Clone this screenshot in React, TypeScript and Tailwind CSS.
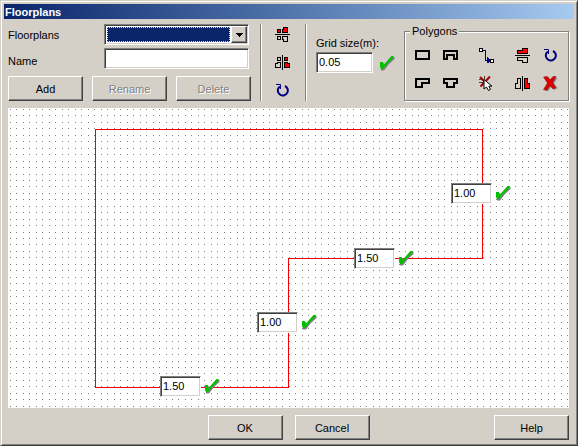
import { ButtonHTMLAttributes, InputHTMLAttributes, ReactNode, useState } from 'react';
import { clsx } from 'clsx';

const SUNKEN =
  'border border-t-[#808080] border-l-[#808080] border-r-white border-b-white shadow-[inset_1px_1px_0_#404040,inset_-1px_-1px_0_#d4d0c8]';
const RAISED =
  'border border-t-white border-l-white border-r-[#404040] border-b-[#404040] shadow-[inset_-1px_-1px_0_#808080]';

// Grid step in pixels for 0.05 m
const STEP_X = 6.48;
const STEP_Y = 6.45;

const EDGES = [
  { id: 'right', value: '1.00', place: 'left-[443px] top-[75px]' },
  { id: 'step-top', value: '1.50', place: 'left-[346px] top-[140px]' },
  { id: 'step-side', value: '1.00', place: 'left-[249px] top-[204px]' },
  { id: 'bottom', value: '1.50', place: 'left-[152px] top-[268px]' },
];

function PushButton({ className, ...props }: ButtonHTMLAttributes<HTMLButtonElement>) {
  return (
    <button
      type="button"
      className={clsx(
        RAISED,
        'h-[25px] w-[75px] bg-[#d4d0c8] text-center leading-4 disabled:text-[#808080] disabled:[text-shadow:1px_1px_0_#fff]',
        className
      )}
      {...props}
    />
  );
}

function TextBox({ className, ...props }: InputHTMLAttributes<HTMLInputElement>) {
  return (
    <input
      type="text"
      className={clsx(SUNKEN, 'h-[21px] bg-white px-0.5 pb-0.5 leading-4 text-black outline-none', className)}
      {...props}
    />
  );
}

function ToolButton({ label, children }: { label: string; children: ReactNode }) {
  return (
    <button type="button" aria-label={label} title={label} className="flex h-5 w-5 items-center justify-center">
      {children}
    </button>
  );
}

function CheckIcon() {
  return (
    <svg width="15" height="16" viewBox="0 0 15 16">
      <path d="M1 8 H4 V11 L12.5 2 H14.5 V4 L9 9 L4 15.5 H1 Z" fill="#808080" />
      <path d="M0 7 H3 V10.5 L11.5 1 H13.5 V2.5 L8 8 L3 14 H1 L0 12 Z" fill="#00c000" />
    </svg>
  );
}

function FlipPlanIcon({ vertical = false }: { vertical?: boolean }) {
  return (
    <svg width="15" height="15" viewBox="0 0 15 15" shapeRendering="crispEdges">
      <g transform={vertical ? 'rotate(90 7.5 7.5)' : undefined} stroke="#000" fill="none">
        <path d="M0 7.5 H15" />
        <path d="M2.5 2.5 H5.5 V5.5 H2.5 Z" fill="#f00" />
        <path d="M7.5 5.5 V2.5 H8.5 V0.5 H12.5 V5.5 Z" fill="#f00" />
        <path d="M2.5 9.5 H5.5 V12.5 H2.5 Z" />
        <path d="M7.5 9.5 V12.5 H8.5 V14.5 H12.5 V9.5 Z" />
      </g>
    </svg>
  );
}

function FlipPolygonIcon({ vertical = false }: { vertical?: boolean }) {
  return (
    <svg width="15" height="15" viewBox="0 0 15 15" shapeRendering="crispEdges">
      <g transform={vertical ? 'rotate(90 7.5 7.5)' : undefined} stroke="#000" fill="none">
        <path d="M0 7.5 H15" />
        <path d="M2.5 5.5 V2.5 H7.5 V0.5 H12.5 V5.5 Z" fill="#f00" />
        <path d="M2.5 9.5 V12.5 H7.5 V14.5 H12.5 V9.5 Z" />
      </g>
    </svg>
  );
}

function RotateIcon() {
  return (
    <svg width="13" height="13" viewBox="0 0 13 13" fill="none" stroke="#000080">
      <path d="M9 2 A5 5 0 1 1 2.5 4 L4 2.5" strokeWidth="2" />
      <path d="M0 0.5 H4.5 V5" />
    </svg>
  );
}

function ShapeIcon({ d }: { d: string }) {
  return (
    <svg width="15" height="10" viewBox="0 0 15 10" shapeRendering="crispEdges">
      <path d={d} fill="none" stroke="#000" strokeWidth="2" />
    </svg>
  );
}

function ConnectIcon() {
  return (
    <svg width="15" height="15" viewBox="0 0 15 15" shapeRendering="crispEdges">
      <path d="M4 2.5 H6.5 V12.5 H11" fill="none" stroke="#000080" />
      <path d="M8 9 L11.5 12.5 L8 16 Z" fill="#0000a0" />
      <path d="M0.5 0.5 H3.5 V3.5 H0.5 Z M11.5 11.5 H14.5 V14.5 H11.5 Z" fill="#fff" stroke="#000" />
    </svg>
  );
}

function RemovePointIcon() {
  return (
    <svg width="15" height="15" viewBox="0 0 15 15">
      <path d="M1 1 L10 10 M11 0.5 L1.5 10.5" stroke="#a00000" strokeWidth="2" />
      <path d="M0 3.5 H3 M5.5 0 V3 M0 6.5 H4" stroke="#404040" />
      <path d="M5 3.5 V13 L7.5 11 L9.5 14.5 L11.5 13.5 L9.8 10.2 H13 Z" fill="#fff" stroke="#000" />
    </svg>
  );
}

function DeleteIcon() {
  return (
    <svg width="15" height="15" viewBox="0 0 15 15">
      <path d="M2 2 L6 2 L8.5 5 L11 2 L14.5 1.5 L11 7.5 L14.5 12 L11.5 14 L8 10.5 L5 15 L1.5 15 L6 8 Z" fill="#808080" />
      <path d="M0.5 1 L4.5 0.5 L7 4 L10 0.5 L13 0.5 L9.5 6.5 L12.5 11.5 L10 13 L7 9.5 L4 14 L0.5 13.5 L4.5 7 Z" fill="#e00000" stroke="#900000" strokeWidth="0.5" />
    </svg>
  );
}

function GridDots() {
  const rows = Array.from({ length: 160 }, (_, i) => Math.floor(1 + i * STEP_Y + 0.5));
  const cols = Array.from({ length: 300 }, (_, i) => Math.floor(2 + i * STEP_X + 0.5));
  return <path d={rows.map(y => cols.map(x => `M${x} ${y}h1v1h-1z`).join('')).join('')} fill="#808080" />;
}

function EdgeField({ id, value, place }: { id: string; value: string; place: string }) {
  const [length, setLength] = useState(value);
  return (
    <div className={clsx('absolute flex items-start gap-1', place)}>
      <TextBox aria-label={`Edge length ${id}`} className="w-[41px]" value={length} onChange={e => setLength(e.target.value)} />
      <button type="button" aria-label="Apply length" className="pt-0.5">
        <CheckIcon />
      </button>
    </div>
  );
}

export default function App() {
  const [name, setName] = useState('');
  const [gridSize, setGridSize] = useState('0.05');

  return (
    <div className="flex h-screen min-h-[300px] flex-col border border-t-[#d4d0c8] border-r-[#404040] border-b-[#404040] border-l-[#d4d0c8] bg-[#d4d0c8] p-[3px] pb-[5px] font-['Liberation_Sans',Arial,sans-serif] text-[11px] leading-4 text-black shadow-[inset_1px_1px_0_#fff,inset_-1px_-1px_0_#808080]">
      <h1 className="h-[15px] shrink-0 bg-linear-to-r from-[#0a246a] to-[#a6caf0] px-px text-[11px] leading-4 font-bold text-white">
        Floorplans
      </h1>

      <div className="flex min-h-0 flex-1 flex-col pt-[5px] pr-[5px] pl-1">
        <div className="flex h-[77px] shrink-0">
          <div className="flex w-[243px] shrink-0 flex-col">
            <div className="flex items-center">
              <label htmlFor="floorplan" className="w-24">Floorplans</label>
              <div className={clsx(SUNKEN, 'flex h-[21px] w-[145px] bg-white p-px')}>
                <div className="flex-1 p-px">
                  <select
                    id="floorplan"
                    className="block h-full w-full appearance-none border border-dotted border-[#f5db95] bg-[#0a246a] text-white outline-none"
                  />
                </div>
                <span className={clsx(RAISED, 'pointer-events-none flex w-4 items-center justify-center bg-[#d4d0c8]')}>
                  <svg width="7" height="4" viewBox="0 0 7 4" shapeRendering="crispEdges">
                    <path d="M0 0 H7 V1 H6 V2 H5 V3 H4 V4 H3 V3 H2 V2 H1 V1 H0 Z" />
                  </svg>
                </span>
              </div>
            </div>
            <div className="mt-[3px] flex items-center">
              <label htmlFor="name" className="w-24 pt-1">Name</label>
              <TextBox id="name" className="w-[145px]" value={name} onChange={e => setName(e.target.value)} />
            </div>
            <div className="mt-[7px] flex justify-between">
              <PushButton>Add</PushButton>
              <PushButton disabled>Rename</PushButton>
              <PushButton disabled>Delete</PushButton>
            </div>
          </div>

          <div className="ml-[9px] flex w-[46px] shrink-0 flex-col items-center justify-center gap-2 border-x border-[#808080] pr-0.5 shadow-[inset_1px_0_0_#fff,1px_0_0_#fff]">
            <ToolButton label="Flip floorplan vertically"><FlipPlanIcon /></ToolButton>
            <ToolButton label="Flip floorplan horizontally"><FlipPlanIcon vertical /></ToolButton>
            <ToolButton label="Rotate floorplan"><RotateIcon /></ToolButton>
          </div>

          <div className="ml-2.5 w-[88px] shrink-0 pt-[11px]">
            <label htmlFor="grid-size" className="block whitespace-nowrap">Grid size(m):</label>
            <div className="mt-px flex items-center gap-[7px]">
              <TextBox id="grid-size" className="w-[57px]" value={gridSize} onChange={e => setGridSize(e.target.value)} />
              <button type="button" aria-label="Apply grid size"><CheckIcon /></button>
            </div>
          </div>

          <fieldset className="min-w-[165px] flex-1 border border-[#808080] px-[3px] pt-[3px] shadow-[inset_1px_1px_0_#fff,1px_1px_0_#fff]">
            <legend className="ml-0.5 bg-[#d4d0c8] px-0.5 leading-[14px]">Polygons</legend>
            <div className="grid auto-rows-[28px] grid-cols-[28px_28px_44px_28px_28px] place-items-center">
              <ToolButton label="Rectangle"><ShapeIcon d="M1 1 H14 V9 H1 Z" /></ToolButton>
              <ToolButton label="U shape"><ShapeIcon d="M1 1 H14 V9 H11 V5 H4 V9 H1 Z" /></ToolButton>
              <ToolButton label="Insert point"><ConnectIcon /></ToolButton>
              <ToolButton label="Flip polygon vertically"><FlipPolygonIcon /></ToolButton>
              <ToolButton label="Rotate polygon"><RotateIcon /></ToolButton>
              <ToolButton label="L shape"><ShapeIcon d="M1 1 H14 V5 H7 V9 H1 Z" /></ToolButton>
              <ToolButton label="T shape"><ShapeIcon d="M1 1 H14 V5 H11 V9 H4 V5 H1 Z" /></ToolButton>
              <ToolButton label="Remove point"><RemovePointIcon /></ToolButton>
              <ToolButton label="Flip polygon horizontally"><FlipPolygonIcon vertical /></ToolButton>
              <ToolButton label="Delete polygon"><DeleteIcon /></ToolButton>
            </div>
          </fieldset>
        </div>

        <div className="relative mt-[7px] min-h-0 flex-1 overflow-hidden bg-white">
          <svg className="block h-full w-full" shapeRendering="crispEdges">
            <GridDots />
            <path d="M87.5 21.5 H474.5 V150.5 H280.5 V279.5 H87.5 Z" fill="none" stroke="#f00000" />
          </svg>
          {EDGES.map(edge => (
            <EdgeField key={edge.id} {...edge} />
          ))}
        </div>

        <div className="grid shrink-0 grid-cols-[1fr_auto_1fr] pt-[7px]">
          <div className="col-start-2 flex gap-3">
            <PushButton>OK</PushButton>
            <PushButton>Cancel</PushButton>
          </div>
          <PushButton className="justify-self-end">Help</PushButton>
        </div>
      </div>
    </div>
  );
}
